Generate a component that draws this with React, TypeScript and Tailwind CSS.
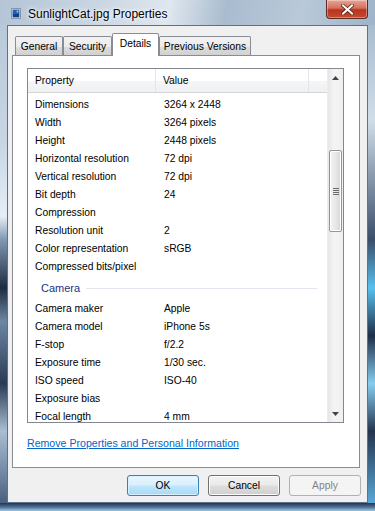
import React from 'react';

type Row = { name: string; value?: string; group?: boolean };

const rows: Row[] = [
  { name: 'Dimensions', value: '3264 x 2448' },
  { name: 'Width', value: '3264 pixels' },
  { name: 'Height', value: '2448 pixels' },
  { name: 'Horizontal resolution', value: '72 dpi' },
  { name: 'Vertical resolution', value: '72 dpi' },
  { name: 'Bit depth', value: '24' },
  { name: 'Compression' },
  { name: 'Resolution unit', value: '2' },
  { name: 'Color representation', value: 'sRGB' },
  { name: 'Compressed bits/pixel' },
  { name: 'Camera', group: true },
  { name: 'Camera maker', value: 'Apple' },
  { name: 'Camera model', value: 'iPhone 5s' },
  { name: 'F-stop', value: 'f/2.2' },
  { name: 'Exposure time', value: '1/30 sec.' },
  { name: 'ISO speed', value: 'ISO-40' },
  { name: 'Exposure bias' },
  { name: 'Focal length', value: '4 mm' },
];

const tabs = [
  { label: 'General', w: 'w-[48px]' },
  { label: 'Security', w: 'w-[49px]' },
  { label: 'Details', w: 'w-[47px]', active: true },
  { label: 'Previous Versions', w: 'w-[92px]' },
];

function FileIcon() {
  return (
    <svg width="10" height="11" viewBox="0 0 10 11">
      <rect x="0.5" y="0.5" width="9" height="10" fill="#fff" stroke="#8a96a6" />
      <rect x="1.5" y="1.5" width="7" height="8" fill="#1f5fb4" />
      <rect x="2" y="6" width="6" height="3" fill="#0f3f85" />
      <circle cx="6.5" cy="3.5" r="1" fill="#9cc8ff" />
    </svg>
  );
}

function CloseButton() {
  return (
    <div className="w-[42px] h-[19px] rounded-b-[4px] border border-t-0 border-[#5a2a25] bg-[linear-gradient(180deg,#e8a596_0%,#d4705e_45%,#b8341f_55%,#c84a2f_100%)] flex items-center justify-center shadow-[inset_0_0_0_1px_rgba(255,255,255,0.35)]">
      <svg width="13" height="11" viewBox="0 0 13 11">
        <path d="M2 1.5 L11 9.5 M11 1.5 L2 9.5" stroke="#5b2118" strokeWidth="3.6" strokeLinecap="square" />
        <path d="M2 1.5 L11 9.5 M11 1.5 L2 9.5" stroke="#fff" strokeWidth="2" strokeLinecap="square" />
      </svg>
    </div>
  );
}

function ScrollBar() {
  return (
    <div className="w-[16px] h-full flex flex-col bg-[linear-gradient(90deg,#e6e6e6_0%,#f4f4f4_40%,#f0f0f0_100%)] border-l border-[#ececec]">
      <div className="h-[17px] flex items-center justify-center">
        <svg width="7" height="4" viewBox="0 0 7 4">
          <path d="M0 4 L3.5 0 L7 4 Z" fill="#444" />
        </svg>
      </div>
      <div className="h-[64px]" />
      <div className="h-[82px] mx-[1px] rounded-[2px] border border-[#959595] bg-[linear-gradient(90deg,#f3f3f3_0%,#e8e8e8_50%,#d6d6d6_100%)] shadow-[inset_0_0_0_1px_#fff] flex items-center justify-center">
        <div className="flex flex-col gap-[1px]">
          <div className="w-[6px] h-[1px] bg-[#6a6a6a]" />
          <div className="w-[6px] h-[1px] bg-[#6a6a6a]" />
          <div className="w-[6px] h-[1px] bg-[#6a6a6a]" />
          <div className="w-[6px] h-[1px] bg-[#6a6a6a]" />
        </div>
      </div>
      <div className="flex-1" />
      <div className="h-[17px] flex items-center justify-center">
        <svg width="7" height="4" viewBox="0 0 7 4">
          <path d="M0 0 L3.5 4 L7 0 Z" fill="#444" />
        </svg>
      </div>
    </div>
  );
}

function PropertyList() {
  return (
    <div className="mt-[12px] ml-[14px] w-[317px] h-[355px] border border-[#828790] bg-white flex overflow-hidden">
      <div className="flex-1 flex flex-col overflow-hidden">
        <div className="h-[24px] shrink-0 flex border-b border-[#d5d5d5] bg-[linear-gradient(180deg,#ffffff_0%,#ffffff_50%,#f5f6f7_51%,#eef0f2_100%)]">
          <div className="w-[128px] pl-[7px] flex items-center border-r border-[#e3e5e8]">Property</div>
          <div className="w-[153px] pl-[7px] flex items-center border-r border-[#e3e5e8]">Value</div>
          <div className="flex-1" />
        </div>
        <div className="pt-[3px]">
          {rows.map((r) =>
            r.group ? (
              <div key={r.name} className="h-[24px] flex items-center pl-[13px] pr-[10px]">
                <span className="text-[#1e3287] text-[11px]">{r.name}</span>
                <div className="flex-1 ml-[6px] h-px bg-[#e2e6ee]" />
              </div>
            ) : (
              <div key={r.name} className="h-[18px] flex items-center">
                <div className="w-[128px] pl-[7px] whitespace-nowrap">{r.name}</div>
                <div className="pl-[8px] whitespace-nowrap">{r.value ?? ''}</div>
              </div>
            )
          )}
        </div>
      </div>
      <ScrollBar />
    </div>
  );
}

function DialogButton({ label, primary, disabled }: { label: string; primary?: boolean; disabled?: boolean }) {
  const base = 'w-[72px] h-[21px] rounded-[3px] flex items-center justify-center';
  if (disabled) {
    return (
      <div className={`${base} border border-[#adb2b5] bg-[#f4f4f4] text-[#838383]`}>{label}</div>
    );
  }
  if (primary) {
    return (
      <div className={`${base} border border-[#3c7fb1] bg-[linear-gradient(180deg,#eaf6fd_0%,#d9f0fc_45%,#bee6fd_55%,#a7d9f5_100%)] shadow-[inset_0_0_0_1px_#d8f0ff]`}>{label}</div>
    );
  }
  return (
    <div className={`${base} border border-[#707070] bg-[linear-gradient(180deg,#f2f2f2_0%,#ebebeb_45%,#dddddd_55%,#cfcfcf_100%)] shadow-[inset_0_0_0_1px_#fcfcfc]`}>{label}</div>
  );
}

export default function App() {
  return (
    <div
      className="w-[375px] h-[511px] flex flex-col overflow-hidden bg-[#6f8aa8] text-black text-[10.3px]"
      style={{ fontFamily: '"Liberation Sans", Arial, sans-serif' }}
    >
      {/* title bar */}
      <div className="h-[25px] shrink-0 flex items-start bg-[linear-gradient(100deg,#b5c5d6_0%,#c8d5e2_25%,#dfe7ef_45%,#a9bccf_60%,#b9c9d9_80%,#9fb4ca_100%)]">
        <div className="ml-[11px] mt-[8px]">
          <FileIcon />
        </div>
        <div className="ml-[7px] mt-[5px] text-[12px] text-black [text-shadow:0_0_6px_#fff,0_0_3px_#fff]">
          SunlightCat.jpg Properties
        </div>
        <div className="flex-1" />
        <div className="mr-[7px]">
          <CloseButton />
        </div>
      </div>

      <div className="flex-1 flex">
        <div className="w-[7px] bg-[linear-gradient(180deg,#b9c9d9_0%,#c8d6e4_25%,#e4eef7_40%,#7f97b1_45%,#1e2c42_55%,#6c86a3_62%,#2a3b55_75%,#a9bed3_85%,#4a6080_100%)]" />
        {/* client area */}
        <div className="w-[361px] bg-[#f0f0f0] border border-[#5d7188] flex flex-col">
          {/* tabs */}
          <div className="pt-[7px] pl-[7px] h-[30px] flex items-end">
            {tabs.map((t) =>
              t.active ? (
                <div
                  key={t.label}
                  className={`${t.w} h-[23px] relative z-10 bg-white border border-b-0 border-[#898c95] rounded-t-[2px] flex items-center justify-center pb-[2px]`}
                >
                  {t.label}
                </div>
              ) : (
                <div
                  key={t.label}
                  className={`${t.w} h-[20px] border border-b-0 border-[#898c95] rounded-t-[2px] bg-[linear-gradient(180deg,#f2f2f2_0%,#ebebeb_50%,#dddddd_51%,#cfcfcf_100%)] flex items-center justify-center`}
                >
                  {t.label}
                </div>
              )
            )}
          </div>
          {/* tab panel */}
          <div className="-mt-px ml-[4px] w-[348px] h-[413px] bg-white border border-[#898c95] flex flex-col">
            <PropertyList />
            <div className="mt-[13px] ml-[14px] text-[10.6px] text-[#0066cc] underline">
              Remove Properties and Personal Information
            </div>
          </div>
          {/* buttons */}
          <div className="mt-[7px] pr-[6px] flex justify-end gap-[9px]">
            <DialogButton label="OK" primary />
            <DialogButton label="Cancel" />
            <DialogButton label="Apply" disabled />
          </div>
        </div>
        <div className="w-[7px] bg-[linear-gradient(180deg,#a8bccf_0%,#d0dde9_20%,#3a4e6a_45%,#58c0ee_55%,#1e2f48_65%,#86cdf0_75%,#24344e_85%,#5aa8d8_100%)]" />
      </div>
      <div className="h-[8px] shrink-0 bg-[linear-gradient(180deg,#233450_0%,#4f6f92_50%,#9ec8e6_100%)]" />
    </div>
  );
}
